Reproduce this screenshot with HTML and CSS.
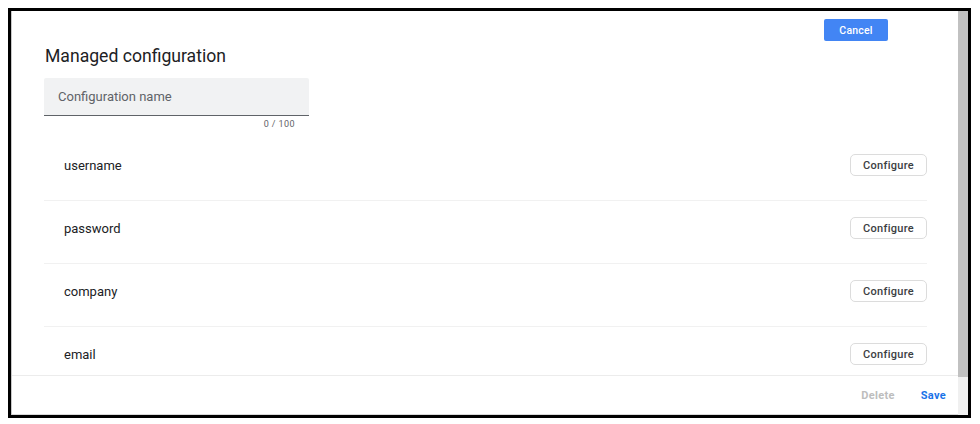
FILE: index.html
```html
<!DOCTYPE html>
<html>
<head>
<meta charset="utf-8">
<link rel="stylesheet" href="styles.css">
</head>
<body>
<div class="frame">
  <div class="dialog">
    <div class="content">
      <div class="topbar"><button class="btn-cancel">Cancel</button></div>
      <h1 class="title">Managed configuration</h1>
      <div class="field">
        <div class="field-box">Configuration name</div>
        <div class="counter">0 / 100</div>
      </div>
      <div class="rows">
        <div class="row"><span class="label">username</span><button class="btn-configure">Configure</button></div>
        <div class="row"><span class="label">password</span><button class="btn-configure">Configure</button></div>
        <div class="row"><span class="label">company</span><button class="btn-configure">Configure</button></div>
        <div class="row"><span class="label">email</span><button class="btn-configure">Configure</button></div>
      </div>
    </div>
    <div class="footer">
      <button class="btn-text btn-delete">Delete</button>
      <button class="btn-text btn-save">Save</button>
    </div>
  </div>
  <div class="scrollbar"><div class="thumb"></div></div>
</div>
</body>
</html>
```
FILE: styles.css
```css
* { box-sizing: border-box; }
html, body { margin: 0; padding: 0; background: #fff; }
body { font-family: Roboto, "Liberation Sans", sans-serif; color: #202124; }

.frame {
  margin: 8px 0 0 8px;
  width: 963px;
  height: 410px;
  border: 3px solid #000;
  display: flex;
  background: #fff;
}

.dialog {
  flex: 1;
  display: flex;
  flex-direction: column;
  border-left: 1px solid #c8c8c8;
  min-width: 0;
}

.content {
  height: 364px;
  overflow: hidden;
  padding: 0 31px 0 32px;
}

.topbar {
  display: flex;
  justify-content: flex-end;
  padding: 8px 39px 0 0;
}

.btn-cancel {
  width: 64px;
  height: 22px;
  border: none;
  border-radius: 2px;
  background: #4285f4;
  color: #fff;
  font-family: Roboto, "Liberation Sans", sans-serif;
  font-size: 10.5px;
  font-weight: 500;
  letter-spacing: 0.2px;
  padding: 0;
}

.title {
  margin: 5px 0 0 1px;
  font-size: 17.6px;
  line-height: 20px;
  font-weight: 400;
  color: #202124;
}

.field {
  width: 265px;
  margin-top: 12px;
}

.field-box {
  height: 38px;
  background: #f1f2f3;
  border-radius: 2px 2px 0 0;
  border-bottom: 1px solid #5f6368;
  padding-left: 14px;
  font-size: 13px;
  line-height: 37px;
  color: #5f6368;
}

.counter {
  margin-top: 2px;
  text-align: right;
  padding-right: 14px;
  font-size: 9px;
  line-height: 12px;
  letter-spacing: 0.4px;
  color: #5f6368;
}

.rows { margin-top: 8px; }

.row {
  display: flex;
  align-items: center;
  justify-content: space-between;
  height: 63px;
  padding: 16px 0 24px 20px;
  border-bottom: 1px solid #f1f1f1;
}

.label {
  font-size: 13px;
  color: #202124;
}

.btn-configure {
  width: 77px;
  height: 22px;
  border: 1px solid #dcdcdc;
  border-radius: 5px;
  background: #fff;
  color: #3c4043;
  font-family: Roboto, "Liberation Sans", sans-serif;
  font-size: 11px;
  font-weight: 500;
  letter-spacing: 0.3px;
  padding: 0;
}

.footer {
  height: 40px;
  border-top: 1px solid #ececec;
  border-bottom: 1px solid #d8d8d8;
  display: flex;
  align-items: center;
  justify-content: flex-end;
  gap: 26px;
  padding-right: 12px;
  background: #fff;
}

.btn-text {
  border: none;
  background: none;
  padding: 0;
  font-family: Roboto, "Liberation Sans", sans-serif;
  font-size: 11px;
  font-weight: 700;
  letter-spacing: 0.3px;
}
.btn-delete { color: #bdbdbd; }
.btn-save { color: #1a73e8; }

.scrollbar {
  width: 10px;
  background: #f0f0f0;
}
.thumb {
  height: 366px;
  background: #c1c1c1;
}
```
